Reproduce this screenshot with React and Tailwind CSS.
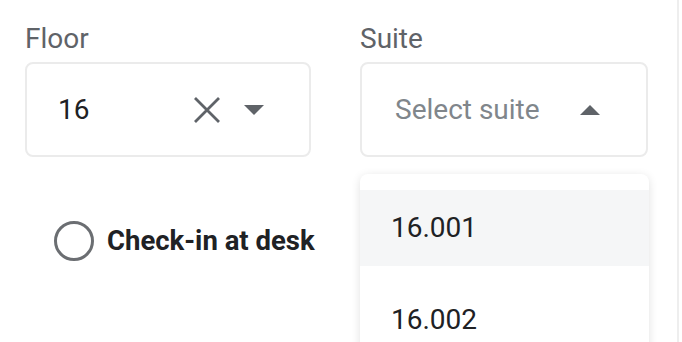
import React from "react";

const CloseIcon = () => (
  <svg width="28" height="28" viewBox="0 0 28 28" fill="none">
    <path d="M2 2 L26 26 M26 2 L2 26" stroke="#5f6368" strokeWidth="2.8" />
  </svg>
);

const CaretDown = () => (
  <svg width="20" height="10" viewBox="0 0 20 10">
    <path d="M0 0 L20 0 L10 10 Z" fill="#5f6368" />
  </svg>
);

const CaretUp = () => (
  <svg width="20" height="10" viewBox="0 0 20 10">
    <path d="M0 10 L20 10 L10 0 Z" fill="#5f6368" />
  </svg>
);

const Label = ({ children, required }) => (
  <div className="text-[28px] leading-[34px] text-[#5f6368] mb-[6px]">
    {children}
    {required && <span className="text-[#d93025]"> *</span>}
  </div>
);

export default function App() {
  return (
    <div className="h-[342px] w-[682px] overflow-hidden bg-white font-['Roboto',sans-serif]">
      <div className="h-full w-[679px] border-r-2 border-[#eeeeee] pl-[25px] pr-[29px] pt-[22px]">
        <div className="grid grid-cols-[286px_288px] gap-x-[49px]">
          <div>
            <Label>Floor</Label>
            <div className="flex h-[95px] items-center rounded-[8px] border-2 border-[#ebebeb] pl-[31px] pr-[45px]">
              <span className="text-[28px] text-[#202124]">16</span>
              <div className="ml-auto flex items-center gap-[23px]">
                <CloseIcon />
                <CaretDown />
              </div>
            </div>
          </div>
          <div className="relative">
            <Label>Suite</Label>
            <div className="flex h-[95px] items-center rounded-[8px] border-2 border-[#ebebeb] pl-[33px] pr-[46px]">
              <span className="text-[28px] text-[#80868b]">Select suite</span>
              <div className="ml-auto">
                <CaretUp />
              </div>
            </div>
            <div className="absolute left-0 right-[-1px] top-[152px] z-10 rounded-[8px] bg-white pt-[16px] shadow-[0_2px_10px_rgba(0,0,0,0.12)]">
              <div className="flex h-[76px] items-center bg-[#f5f6f7] pl-[31px] text-[28px] text-[#202124]">
                16.001
              </div>
              <div className="mt-[16px] flex h-[76px] items-center pl-[31px] text-[28px] text-[#202124]">
                16.002
              </div>
            </div>
          </div>
        </div>
        <div className="mt-[63px] flex items-center gap-[13px] pl-[29px]">
          <div className="h-[40px] w-[40px] rounded-full border-[3px] border-[#6b6e72]" />
          <span className="text-[27.5px] font-bold text-[#202124]">Check-in at desk</span>
        </div>
        <div className="mt-[76px]">
          <Label required>Desk</Label>
        </div>
      </div>
    </div>
  );
}
